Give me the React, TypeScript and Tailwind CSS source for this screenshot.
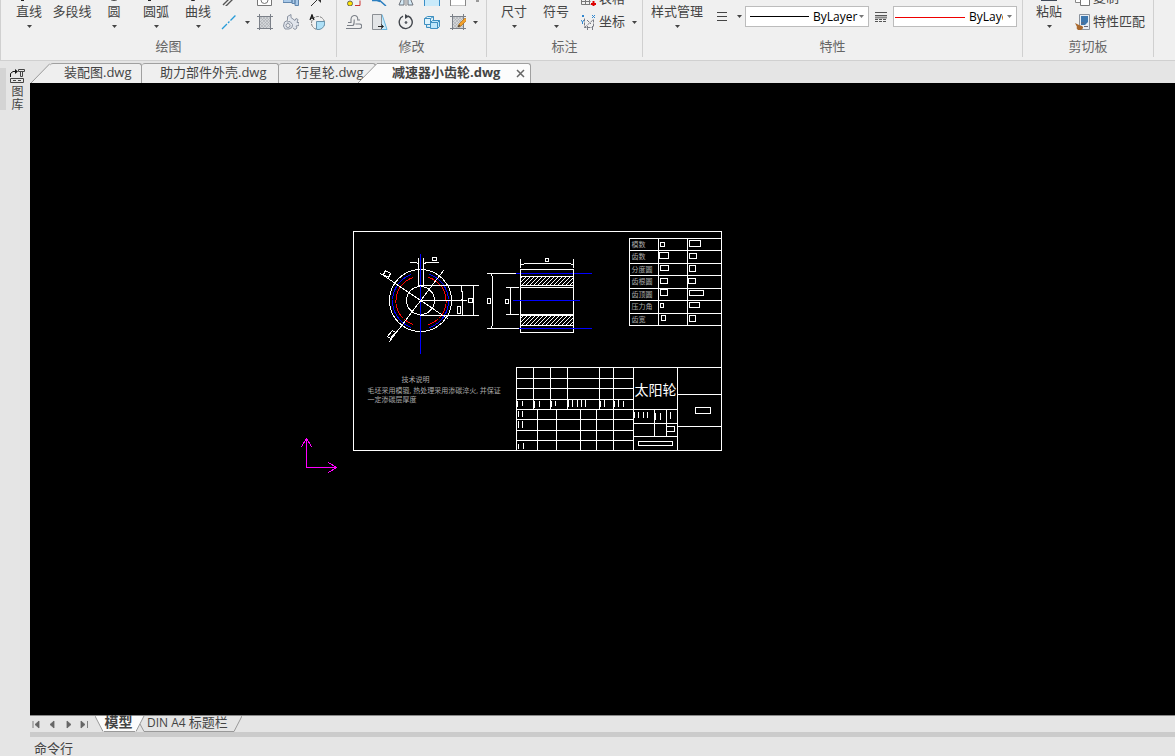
import { useState, type ReactNode } from 'react';

const Caret = () => (
  <svg width="5" height="3" viewBox="0 0 5 3" className="shrink-0 fill-[#444]">
    <path d="M0 0h5L2.5 3z" />
  </svg>
);

function Icon({ children }: { children?: ReactNode }) {
  return (
    <svg width="16" height="16" viewBox="0 0 16 16" fill="none" stroke="#6b7078" className="shrink-0">
      {children}
    </svg>
  );
}

function Group({ title, children, className, inset = '' }: { title: string; children: ReactNode; className: string; inset?: string }) {
  return (
    <section className={`h-[57px] shrink-0 border-r border-[#d0d0d0] ${className}`}>
      <div className={`h-[34px] flex items-end overflow-hidden ${inset}`}>{children}</div>
      <h2 className="pt-1 text-center text-[#666]">{title}</h2>
    </section>
  );
}

function BigButton({ label, icon, menu = true, className }: { label: string; icon?: ReactNode; menu?: boolean; className: string }) {
  return (
    <button className={`shrink-0 flex flex-col items-center whitespace-nowrap ${className}`}>
      <Icon>{icon}</Icon>
      <span className="mt-[2px] h-4">{label}</span>
      <span className="h-[15px] pt-[6px]">{menu && <Caret />}</span>
    </button>
  );
}

function Tool({ name, children }: { name: string; children: ReactNode }) {
  return (
    <button aria-label={name} className="h-6 flex items-center"><Icon>{children}</Icon></button>
  );
}

function MenuArrow({ name, className = 'w-5' }: { name: string; className?: string }) {
  return (
    <button aria-label={name} className={`h-6 flex items-center justify-center ${className}`}><Caret /></button>
  );
}

const hatchSquare = (
  <>
    <path d="M2 3h12v11H2z" fill="#d2d5d8" stroke="none" />
    <path d="M2 6l8 8M2 9l5 5M2 12l2 2M3 3l10 10M6 3l8 8M9 3l5 5M12 3l2 2M5 3L2 6M8 3l-6 6M11 3L2 12M14 3L3 14M14 6l-8 8M14 9l-5 5" stroke="#a9adb2" strokeWidth=".6" />
    <path d="M0 2.500h16M0 14.500h16M2.500 0v16M13.500 0v16" stroke="#7b8088" />
  </>
);

function DrawGroup() {
  return (
    <Group title="绘图" className="w-[336px]" inset="pl-[10px]">
      <BigButton label="直线" className="w-9" icon={<path d="M0 13h3v3H0z" fill="#222" stroke="none" />} />
      <BigButton label="多段线" className="w-[50px]" menu={false} />
      <BigButton label="圆" className="w-[34px]" icon={<circle cx="8" cy="9" r="6.500" stroke="#444" />} />
      <BigButton label="圆弧" className="w-[50px]" icon={<path d="M0 13h3v3H0z" fill="#222" stroke="none" />} />
      <BigButton label="曲线" className="w-[34px]" icon={<path d="M1.500 11.500h3v4h-3z" stroke="#222" />} />
      <div className="pl-[6px]">
        <div className="flex">
          <Tool name="双线"><path d="M2 15L15 2M4 17L17 4" stroke="#555" strokeWidth="1.400" /></Tool>
          <span className="w-5" />
          <div className="flex gap-[10px]">
            <Tool name="视口"><path d="M.5 6v9.500h14V6" fill="#fff" stroke="#777" /><circle cx="7.500" cy="10" r="3.500" stroke="#777" /></Tool>
            <Tool name="螺栓"><path d="M0 8.500h9v4H0zM9 7.500h3v6H9zM12 7.500h3.500v8H12z" fill="#a9c9e8" stroke="#6186ad" /></Tool>
            <Tool name="引线"><path d="M2 16L10 8" stroke="#333" /><path d="M6 7h6v6z" fill="#333" stroke="none" /></Tool>
          </div>
        </div>
        <div className="flex">
          <Tool name="中心线"><path d="M1 15L15 1" stroke="#279bd8" strokeWidth="1.300" strokeDasharray="7 1.500 2 1.500" /></Tool>
          <MenuArrow name="更多线型" />
          <div className="flex gap-[10px]">
            <Tool name="填充">{hatchSquare}</Tool>
            <Tool name="零件">
              <path d="M4.500 2.500L8 .5v3l4 3 1-2 2 1-1 3h2v3l-3 .5 1 2-2 1.500-2-1.500M4.500 2.500v4l-3 1.500L.5 12l1.500 3h4l3-1.500.5-3-2.500-3-3 .5" fill="#e1e5ec" stroke="#8b93a1" />
              <circle cx="5" cy="11.500" r="2" fill="#f0f0f0" stroke="#8b93a1" />
            </Tool>
            <Tool name="局部视图">
              <circle cx="9" cy="9" r="6.500" stroke="#777" strokeDasharray="3 1" />
              <path d="M7.500 7.500h8a6.500 6.500 0 0 1-8 7.800z" fill="#aee0f7" stroke="#6793ad" />
              <path d="M1 6L3 .8 5 6M1.700 4.200h2.600" stroke="#111" strokeWidth="1.200" />
            </Tool>
          </div>
        </div>
      </div>
    </Group>
  );
}

function ModifyGroup() {
  return (
    <Group title="修改" className="w-[150px]" inset="pl-[9px]">
      <div>
        <div className="flex gap-[10px]">
          <Tool name="复制"><path d="M9 15.500h5v-5M12 9.500h4" stroke="#c33" /><circle cx="4" cy="13.500" r="2.500" fill="#ffe400" stroke="#665" /></Tool>
          <Tool name="修剪"><path d="M0 10.500h5l3 1M6 9l8 7" stroke="#2c7fc0" strokeWidth="1.500" /></Tool>
          <Tool name="镜像"><path d="M6 3v12H1zM10 3v12h5z" fill="#d6ebf7" stroke="#6b7078" /><path d="M8 0v16" stroke="#888" /></Tool>
          <Tool name="缩放"><path d="M.5 5v11.500h15V4h-5" fill="#c9eafa" stroke="#3a8fc8" /></Tool>
          <Tool name="阵列"><path d="M.5 0v16h15V0" fill="#fff" stroke="#888" /></Tool>
          <Tool name="更多"><path d="M0 11h3" stroke="#444" /></Tool>
        </div>
        <div className="flex">
          <div className="flex gap-[10px]">
            <Tool name="偏移">
              <path d="M2 8.500h3V5a3.500 3.500 0 0 1 6-2.400c1 1 .7 2.300.7 3.400h2.300M1 11.500h5.500c1.500 0 1.700-1 1.700-6M0 14.500h13.500a2.200 2.200 0 0 0 0-4.500H9.500" stroke="#7b8088" strokeWidth="1.100" />
            </Tool>
            <Tool name="拉伸"><path d="M6 .5h4l5 15H6z" fill="#c9eafa" stroke="#67b5df" /><path d="M9.500 .5H.5v15h9z" fill="#e3e5e7" stroke="#8b8f94" /><path d="M6 12.500h5M9 10.500l2.500 2L9 14.500" stroke="#222" /></Tool>
            <Tool name="旋转"><path d="M5 2.200A6.500 6.500 0 1 0 10 2" stroke="#42464c" strokeWidth="1.400" /><path d="M7 0v5l4-2.500z" fill="#42464c" stroke="none" /><circle cx="8" cy="8.500" r="1" fill="#333" /></Tool>
            <Tool name="三维阵列">
              <path d="M.5 4.500l3-2h6v6l-3 2h-6z M.5 4.500h6v6M6.500 4.500l3-2" fill="#dff3fc" stroke="#3d8fc0" />
              <path d="M6.500 8.500l2-2h7v6l-2 2h-7zM6.500 8.500h7v6M13.500 8.500l2-2M2.500 10.500v3h4" fill="#bde6fa" stroke="#3d8fc0" />
            </Tool>
            <Tool name="编辑填充">
              {hatchSquare}
              <path d="M8 13l1-3 6-6 2 2-6 6z" fill="#f3a12b" stroke="#a8640c" strokeWidth=".6" />
              <path d="M7.500 13.500l1.500-3 1.300 1.500z" fill="#444" stroke="none" />
            </Tool>
          </div>
          <MenuArrow name="更多修改" className="w-[18px]" />
        </div>
      </div>
    </Group>
  );
}

function AnnotateGroup() {
  return (
    <Group title="标注" className="w-[156px]" inset="pl-[6px]">
      <BigButton label="尺寸" className="w-[42px]" />
      <BigButton label="符号" className="w-[42px]" />
      <div className="pl-1">
        <button className="h-6 flex items-center gap-[2px]">
          <Icon><path d="M.5 3v11.500h9M.5 7.500h14M.5 11.500h9M4.500 3v11M8.500 3v11" stroke="#777" /><path d="M12.500 11v6M10 14h5" stroke="#d00" strokeWidth="2" /></Icon>
          <span>表格</span>
        </button>
        <button className="h-6 flex items-center gap-[2px]">
          <Icon>
            <path d="M3.500 4.500v9h8M3.500 13.500l9-8M12.500 5.500v7M6 6l4 4" stroke="#777b84" strokeDasharray="3 1" />
            <path d="M1 1l2 2M3 1L1 3M11 1l3 3M14 1l-3 3M0 6l1.500 2L3 6M1.500 8v2" stroke="#2f86cf" />
            <path d="M6.500 12v4M11.500 12v4" stroke="#777b84" />
          </Icon>
          <span className="pb-[2px]">坐标</span>
          <span className="pl-[5px]"><Caret /></span>
        </button>
      </div>
    </Group>
  );
}

function LayerSelect({ label, line, clip }: { label: string; line: ReactNode; clip?: boolean }) {
  return (
    <div className="relative w-[124px] h-[21px] border border-[#bcbcbc] bg-white">
      <select
        aria-label={label}
        className={`absolute inset-y-0 right-0 h-full appearance-none bg-transparent text-xs text-black outline-none ${clip ? 'w-[47px] pr-[13px]' : 'w-[55px] pr-[10px]'}`}
      >
        <option>ByLayer</option>
        <option>ByBlock</option>
      </select>
      {line}
      <svg width="5" height="3" viewBox="0 0 5 3" className="absolute right-1 top-2 pointer-events-none fill-[#777]">
        <path d="M0 0h5L2.500 3z" />
      </svg>
    </div>
  );
}

function PropertyGroup() {
  return (
    <Group title="特性" className="w-[380px]">
      <BigButton label="样式管理" className="w-[68px]" />
      <div className="flex items-center pb-[7px]">
        <button aria-label="线型" className="w-[22px] flex justify-center">
          <svg width="10" height="9" viewBox="0 0 10 9" stroke="#444"><path d="M0 .5h10M0 4.500h10M0 8.500h10" /></svg>
        </button>
        <button aria-label="线型列表" className="w-3 flex justify-center"><Caret /></button>
        <LayerSelect label="图层线型" line={<span className="absolute left-1 top-[9px] w-[59px] h-px bg-black" />} />
        <button aria-label="线宽" className="w-6 flex justify-center">
          <svg width="12" height="10" viewBox="0 0 12 10" stroke="#555">
            <path d="M0 .5h12M0 3.500h12" /><path d="M0 5.500h12" stroke="#888" strokeWidth="2" /><path d="M0 7.500h12M0 9.500h12" strokeDasharray="3 1" />
          </svg>
        </button>
        <LayerSelect clip label="图层线宽" line={<span className="absolute left-px top-[10px] w-[70px] h-px bg-[#e00]" />} />
      </div>
    </Group>
  );
}

function ClipboardGroup() {
  return (
    <Group title="剪切板" className="w-[131px]">
      <BigButton label="粘贴" className="w-[52px]" icon={<path d="M0 0h16v16H0z" fill="#3f4856" stroke="none" />} />
      <div>
        <button className="h-6 flex items-center gap-[2px]">
          <Icon><path d="M.5 2v10.500h9V2" fill="#fff" stroke="#888" /><path d="M5.500 6v9.500h9V6z" fill="#fff" stroke="#777" /></Icon>
          <span className="pb-[2px]">复制</span>
          <span className="pl-[5px]"><Caret /></span>
        </button>
        <button className="h-6 flex items-center gap-[2px] whitespace-nowrap">
          <Icon>
            <path d="M4.500.5h10v15h-10z" fill="#e8eef5" stroke="#8a929c" />
            <path d="M6 2h7v6l-3 3H6z" fill="#3d77ae" stroke="none" /><path d="M6 9h3M9 12.500h4" stroke="#667" />
            <path d="M0 9l4 2 3 1c2 1 1 3-1 4H3c-1-1-2-2-1-3z" fill="#a9692e" stroke="none" />
          </Icon>
          <span className="pb-[2px]">特性匹配</span>
        </button>
      </div>
    </Group>
  );
}

const files = ['装配图.dwg', '助力部件外壳.dwg', '行星轮.dwg'];
const filePadding = ['pl-[14px] w-[92px]', 'pl-[18px] w-[137px]', 'pl-[17px] w-[97px]'];

function FileTabs() {
  return (
    <nav className="h-[22px] pt-[2px] flex leading-[15px]">
      <svg width="20" height="20" viewBox="0 0 20 20" className="shrink-0">
        <path d="M1 20L20 .5V20z" fill="#efefef" /><path d="M1 20L20 .5" stroke="#999" />
      </svg>
      {files.map((f, i) => (
        <button key={f} className={`shrink-0 pb-[3px] border-t border-r border-[#a0a0a0] rounded-t-[3px] bg-[#efefef] text-left whitespace-nowrap ${filePadding[i]}`}>
          {f}
        </button>
      ))}
      <div className="relative -ml-[19px] flex shrink-0">
        <svg width="20" height="20" viewBox="0 0 20 20" className="shrink-0">
          <path d="M1 20L20 .5V20z" fill="#fcfcfc" /><path d="M1 20L20 .5" stroke="#999" />
        </svg>
        <div className="w-[154px] flex items-center justify-between pl-[15px] pr-[5px] border-t border-r border-[#a0a0a0] rounded-tr-[3px] bg-[#fcfcfc]">
          <button className="pb-[3px] font-bold whitespace-nowrap">减速器小齿轮.dwg</button>
          <button aria-label="关闭">
            <svg width="9" height="9" viewBox="0 0 9 9" stroke="#666" strokeWidth="1.500"><path d="M1 1l7 7M8 1L1 8" /></svg>
          </button>
        </div>
      </div>
    </nav>
  );
}

// sheet coordinates; [x, y, w, h]
const params = [
  { name: '模数', y: 238, boxes: [[660, 242, 4, 4], [689, 240, 11, 6]] },
  { name: '齿数', y: 250, boxes: [[659, 252, 9, 6], [689, 253, 7, 5]] },
  { name: '分度圆', y: 263, boxes: [[660, 265, 8, 5], [689, 265, 6, 6]] },
  { name: '齿根圆', y: 275, boxes: [[660, 278, 7, 5], [688, 278, 7, 5]] },
  { name: '齿顶圆', y: 288, boxes: [[660, 289, 7, 6], [689, 290, 14, 5]] },
  { name: '压力角', y: 300, boxes: [[660, 303, 3, 4], [689, 302, 10, 5]] },
  { name: '齿宽', y: 313, boxes: [[661, 315, 4, 5], [689, 315, 6, 6]] },
];

// [x, top, bottom]
const ticks = [
  [517, 401, 406], [522, 401, 405], [534, 401, 407], [539, 401, 406], [551, 401, 406], [555, 401, 405],
  [568, 400, 406], [572, 400, 406], [577, 400, 406], [581, 400, 406], [585, 400, 406],
  [600, 401, 406], [604, 400, 406], [614, 401, 406], [618, 400, 406], [623, 401, 406],
  [518, 411, 416], [522, 411, 416], [518, 421, 427], [522, 421, 427], [518, 444, 448], [523, 443, 448],
  [634, 412, 417], [638, 412, 417], [643, 412, 417], [647, 412, 417], [655, 413, 419], [660, 413, 419], [670, 412, 418],
];

function Gear() {
  return (
    <g>
      <circle cx="420" cy="300" r="31" />
      <circle cx="420" cy="300" r="14" />
      <g strokeLinecap="butt">
        <path stroke="#00f" d="M411 274A28 28 0 0 0 411 327M429 274A28 28 0 0 1 429 327" strokeDasharray="16 1" />
        <path stroke="#f00" d="M413 277A24.500 24.500 0 0 0 413 324M428 277A24.500 24.500 0 0 1 428 324" strokeDasharray="16 1" />
      </g>
      <path stroke="#00f" d="M420 254V353" />
      <path d="M418 258V286M423 258V286M418 285H423M410 262H415L418 263M423 263L427 262H438" />
      <path d="M432 257h4v3h-4zM468 298h4v4h-4zM457 306h3v7h-3z" />
      <path d="M423 285H478M420 300H466M420 315H478M461 285V290L462 292V298L461 300M462 300V315M473 285V315" />
      <path d="M380 273L447 318M443 270L389 341" />
      <path d="M383 274l2-4 5 3-2 4zM387 336l5-6 3 2-5 6z" />
    </g>
  );
}

const hatchStarts = Array.from({ length: 17 }, (_, i) => 508 + i * 4);

function Section() {
  return (
    <g>
      <clipPath id="section-cut">
        <path d="M520 276H573V285H520zM520 315H573V325H520z" />
      </clipPath>
      <g clipPath="url(#section-cut)">
        {hatchStarts.map((x) => <path key={x} d={`M${x} 286l12-12M${x} 326l13-13`} />)}
      </g>
      <path d="M520 276H573M520 285H573M520 315H573M520 325H573" />
      <path d="M520 269H573V332H520zM520 287H573M520 314H573" />
      <path stroke="#00f" d="M516 273H519M521 273H572M574 273H591M513 300H579M519 328H591" />
      <path d="M487 273H515M487 328H518M491 273V275L492 276V325L491 326V328M506 287H518M506 314H518M510 287V314" />
      <path d="M520 259V267M573 259V267M520 264H523L524 263H570L571 264H573" />
      <path d="M545 258h3v3h-3zM487 298h3v5h-3zM505 299h3v4h-3z" />
    </g>
  );
}

function Sheet() {
  return (
    <svg width="430" height="255" viewBox="300 225 430 255" fill="none" stroke="#fff" strokeLinecap="square" shapeRendering="crispEdges" className="shrink-0">
      <g transform="translate(.5 .5)">
        <path d="M353 231H721V450H353z" />
        <Gear />
        <Section />
        <path d="M721 238H629V325H721M658 238V325M687 238V325" />
        {params.map((p) => (
          <g key={p.name}>
            <path d={`M629 ${p.y}H721`} />
            {p.boxes.map(([x, y, w, h]) => <rect key={x} x={x} y={y} width={w} height={h} />)}
            <text x="631" y={p.y + 8} fontSize="7" fill="#aaa" stroke="none">{p.name}</text>
          </g>
        ))}
        <g fontSize="7" fill="#aaa" stroke="none">
          <text x="401" y="381">技术说明</text>
          <text x="367" y="392">毛坯采用模锻, 热处理采用渗碳淬火, 并保证</text>
          <text x="367" y="401">一定渗碳层厚度</text>
        </g>
        <path d="M516 450V367H721M633 367V450M677 367V450" />
        <path d="M516 378H633M516 388H633M516 399H633M516 409H677M516 419H633M516 430H633M516 440H633" />
        <path d="M533 367V409M550 367V409M567 367V409M599 367V409M613 367V450" />
        <path d="M537 409V450M556 409V450M580 409V450M596 409V450" />
        <path d="M633 423H677M633 436H677M654 409V436M666 409V436M677 394H721M677 426H721" />
        <path d="M666 426h8v5h-8zM638 441h34v4h-34zM695 407h15v6h-15z" />
        {ticks.map(([x, a, b]) => <path key={`${x}-${a}`} d={`M${x} ${a}V${b}`} />)}
        <text x="634" y="394" fontSize="14" fill="#fff" stroke="none">太阳轮</text>
        <path stroke="#f0f" d="M306 467V438M301 446L306 438L311 446M306 467H335M328 462L336 467L328 472" />
      </g>
    </svg>
  );
}

const navIcons = [
  { name: '首页', d: 'M1 1v7M7 1v7L3 4.500z' },
  { name: '上一页', d: 'M6 1v7L2 4.500z' },
  { name: '下一页', d: 'M3 1v7l4-3.500z' },
  { name: '末页', d: 'M1 1v7l4-3.500zM7.500 1v7' },
];

function LayoutTabs() {
  return (
    <nav className="h-[17px] flex border-t border-[#888]">
      <div className="w-[65px] flex">
        {navIcons.map((n) => (
          <button key={n.name} aria-label={n.name} className="w-4 flex items-center pl-[2px]">
            <svg width="9" height="9" viewBox="0 0 9 9" fill="#666" stroke="#666" strokeWidth=".8"><path d={n.d} /></svg>
          </button>
        ))}
      </div>
      <svg width="9" height="16" viewBox="0 0 9 16" className="shrink-0"><path d="M0 0L8 15.500H9V0z" fill="#fcfcfc" /><path d="M0 0L8 15.500" stroke="#999" /></svg>
      <button className="shrink-0 w-[31px] pb-[3px] pr-[2px] border-b border-[#999] bg-[#fcfcfc] text-sm font-bold leading-3 whitespace-nowrap">模型</button>
      <svg width="12" height="16" viewBox="0 0 12 16" className="shrink-0" fill="none">
        <path d="M9 0H0V15.500H1z" fill="#fcfcfc" /><path d="M1 15.500L9 0M5 8L9 15.500H12" stroke="#999" />
      </svg>
      <button className="shrink-0 pb-[3px] border-b border-[#999] leading-3 whitespace-nowrap"><span className="text-xs leading-3">DIN A4 </span>标题栏</button>
      <svg width="14" height="16" viewBox="0 0 14 16" className="shrink-0" fill="none"><path d="M0 15.500H6L14 0" stroke="#999" /></svg>
    </nav>
  );
}

export default function App() {
  const [command, setCommand] = useState('');

  return (
    <div className="min-h-screen flex flex-col overflow-hidden bg-[#e5e5e5] text-[13px] leading-4 text-[#444] font-['Open_Sans','Noto_Sans_CJK_SC',sans-serif]">
      <header className="h-[61px] flex border-b border-l border-[#d0d0d0] bg-[#f0f0f0]">
        <DrawGroup />
        <ModifyGroup />
        <AnnotateGroup />
        <PropertyGroup />
        <ClipboardGroup />
      </header>
      <div className="flex-1 flex">
        <aside className="w-[30px] shrink-0 pt-[7px]">
          <div className="h-[42px] flex gap-1">
            <span className="w-[6px] bg-[#d4d4d4]" />
            <button className="flex flex-col items-center text-xs leading-[13px]">
              <svg width="15" height="17" viewBox="0 0 15 17" fill="none" stroke="#444" className="shrink-0">
                <path d="M.5 9V5.500L3 3.500H6" stroke="#111" /><path d="M5 1v5l3-2.500z" fill="#111" stroke="none" />
                <path d="M8.500 1.500h6v2h-6zM10.500 3.500h2v5h-2zM.5 10.500h13v4H.5zM3 12.500h3M8 12.500h3" />
              </svg>
              <span>图</span>
              <span>库</span>
            </button>
          </div>
        </aside>
        <div className="flex-1 min-w-0 flex flex-col">
          <FileTabs />
          <main className="flex-1 overflow-hidden bg-black pt-[142px] pl-[270px]">
            <Sheet />
          </main>
          <LayoutTabs />
          <div className="h-[5px] bg-[#cbcbcb]" />
          <label className="h-[19px] pl-1 pt-[3px] flex">
            <span className="shrink-0">命令行</span>
            <input value={command} onChange={(e) => setCommand(e.target.value)} className="flex-1 min-w-0 h-4 px-2 bg-transparent outline-none" />
          </label>
        </div>
      </div>
    </div>
  );
}
